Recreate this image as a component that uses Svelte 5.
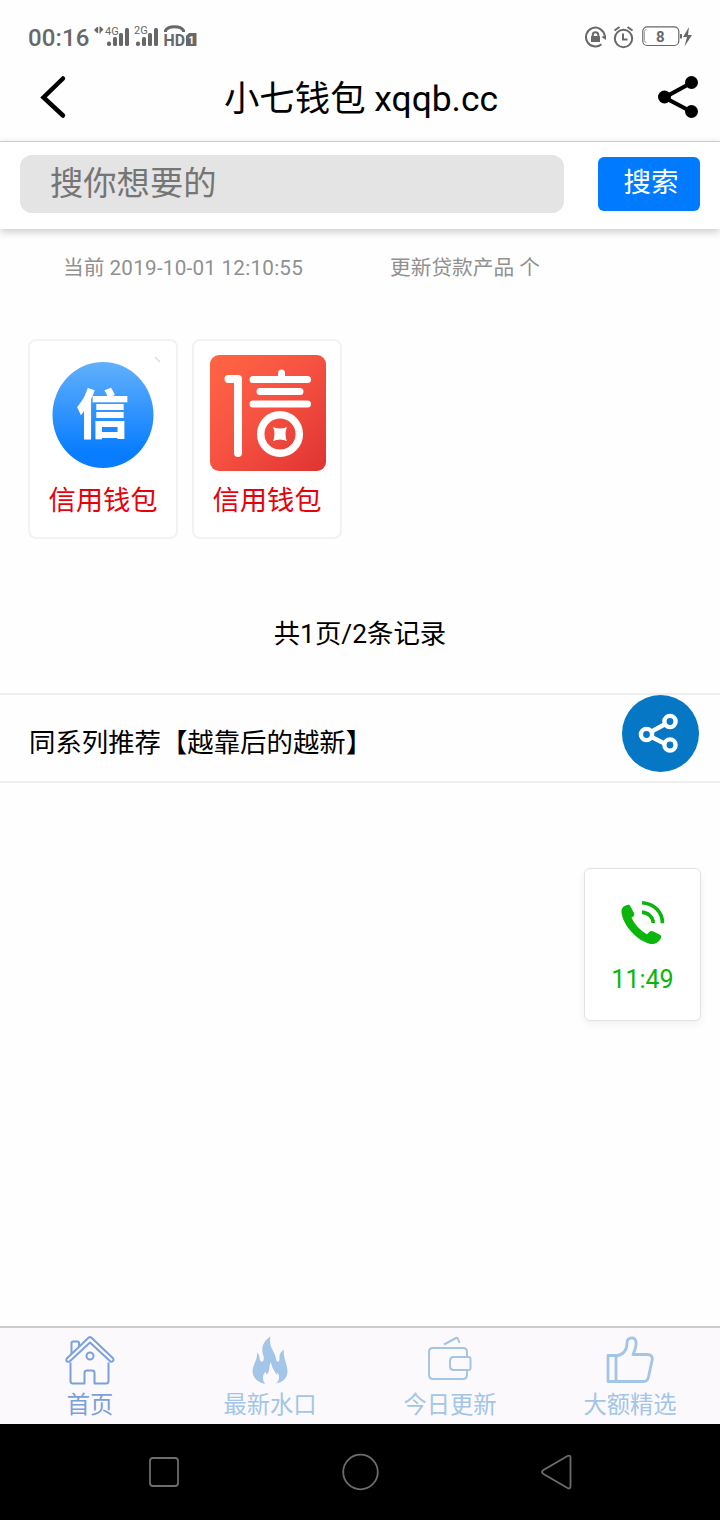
<script lang="ts">
	type Tab = { id: string; label: string };

	const tabs: Tab[] = [
		{ id: 'home', label: '首页' },
		{ id: 'fire', label: '最新水口' },
		{ id: 'wallet', label: '今日更新' },
		{ id: 'like', label: '大额精选' }
	];

	const products = [
		{ logo: 'blue', name: '信用钱包' },
		{ logo: 'red', name: '信用钱包' }
	];

	let active = $state('home');
	let keyword = $state('');
</script>

<div class="screen">
	<div class="status">
		<span class="clock">00:16</span>
		<svg class="signals" width="104" height="30" viewBox="94 22 104 30" fill="#686868">
			<path d="M94 30l3-3v6zM97 27h1.200v6H97zM99.500 26.500h1.200v7h-1.200zM100.500 26.500l3 3-3 3z" />
			<text x="105" y="35" font-size="11">4G</text>
			<text x="134" y="34" font-size="11">2G</text>
			<rect x="107" y="41.500" width="4" height="4.500" rx="1.800" />
			<rect x="113" y="37" width="4" height="9" rx="1.500" />
			<rect x="119" y="33" width="4" height="13" rx="1.500" />
			<rect x="125" y="28" width="4" height="18" rx="1.500" />
			<rect x="136" y="41.500" width="4" height="4.500" rx="1.800" />
			<rect x="142" y="37" width="4" height="9" rx="1.500" />
			<rect x="148" y="33" width="4" height="13" rx="1.500" />
			<rect x="154" y="28" width="4" height="18" rx="1.500" />
			<path d="M165.500 32v-1.500c3-5 15-5 18 0v1.500" fill="none" stroke="#686868" stroke-width="3" />
			<text x="163.500" y="46" font-size="16.500" font-weight="700" textLength="21.500" lengthAdjust="spacingAndGlyphs">HD</text>
			<path d="M189 33h7.500v13H186V36z" />
			<text class="sim" x="188.500" y="43.500" font-size="10" font-weight="700">1</text>
		</svg>
		<svg class="right" width="110" height="30" viewBox="584 22 110 30" fill="none" stroke="#686868" stroke-width="2">
			<path d="M601.500 44.200a9.400 9.400 0 1 1 3.200-8.500" />
			<path d="M601.500 37l4.500-2v5z" fill="#686868" stroke="none" />
			<rect x="591" y="36" width="9" height="6" rx=".5" fill="#686868" stroke="none" />
			<path d="M592.700 37v-2a2.800 2.800 0 0 1 5.600 0v2" />
			<circle cx="623.500" cy="38.500" r="8.700" />
			<path d="M623 33.500v6h4.500M614.500 30.500l5-3.500M627.500 27l5 3.500" />
			<rect x="642.800" y="26.800" width="36" height="18.700" rx="4.500" stroke-width="1.200" />
			<path d="M646.500 29.500q-2 0-2 2v9q0 2 2 2" stroke="#aaa" stroke-width="1" />
			<text x="656" y="42" font-size="15" font-weight="700" fill="#686868" stroke="none">8</text>
			<path d="M680 34h2v4.500h-2zM689 27l-6 10h4l-2.500 9.500 7.500-11.500h-4z" fill="#686868" stroke="none" />
		</svg>
	</div>

	<header>
		<svg width="30" height="46" viewBox="38 74 30 46">
			<path d="M63 78.500L43.500 97.500 63 115.500" fill="none" stroke="#000" stroke-width="4.500" stroke-linecap="round" />
		</svg>
		<h1>小七钱包 xqqb.cc</h1>
		<svg width="42" height="44" viewBox="657 75 42 44">
			<path d="M691 83L664.500 97.500 691 111.500" fill="none" stroke="#000" stroke-width="4.200" />
			<circle cx="691.500" cy="82.500" r="6.500" />
			<circle cx="664.500" cy="97" r="6.500" />
			<circle cx="691.500" cy="111.500" r="6.500" />
		</svg>
	</header>

	<div class="search">
		<input bind:value={keyword} placeholder="搜你想要的" />
		<button class="go">搜索</button>
	</div>

	<div class="info">
		<span class="now">当前 <span class="time">2019-10-01 12:10:55</span></span>
		<span>更新贷款产品 个</span>
	</div>

	<div class="products">
		{#each products as product}
			<div class="card">
				{#if product.logo === 'blue'}
					<svg width="116" height="116" viewBox="0 0 116 116">
						<defs>
							<linearGradient id="blue" x1="0" y1="0" x2="0" y2="1">
								<stop offset="0" stop-color="#62b0fb" />
								<stop offset=".85" stop-color="#087dff" />
							</linearGradient>
						</defs>
						<ellipse cx="58" cy="60" rx="50.500" ry="53" fill="url(#blue)" />
						<path d="M110 2l5 5" stroke="#ecd3dc" stroke-width="1.500" />
						<text class="mark" x="31" y="79" font-size="53">信</text>
					</svg>
				{:else}
					<svg class="red" width="116" height="116" viewBox="0 0 116 116">
						<defs>
							<linearGradient id="red" x1="0" y1="0" x2="1" y2="1">
								<stop offset="0" stop-color="#ff6543" />
								<stop offset=".45" stop-color="#f75342" />
								<stop offset="1" stop-color="#df3331" />
							</linearGradient>
						</defs>
						<rect width="116" height="116" rx="9" fill="url(#red)" />
						<g fill="none" stroke="#fff" stroke-width="8" stroke-linecap="round">
							<path d="M18.500 24h9.500v74" stroke-linejoin="round" />
							<path d="M43 24.500h54.500M50 36.500h40M43 49h54.500" stroke-width="7" />
							<path d="M71.500 18v4" stroke-width="7" />
							<circle cx="70" cy="79" r="19.300" stroke-width="7.500" />
						</g>
						<path d="M63 72q7 3 14 0-3 7 0 14-7-3-14 0 3-7 0-14z" fill="#fff" />
					</svg>
				{/if}
				<span>{product.name}</span>
			</div>
		{/each}
	</div>

	<p class="pages">共1页/2条记录</p>

	<section class="related">
		<span>同系列推荐【越靠后的越新】</span>
		<button class="share" aria-label="分享">
			<svg width="77" height="77" viewBox="0 0 77 77" fill="none" stroke="#fff" stroke-width="4.400">
				<circle cx="38.500" cy="38.500" r="38.500" fill="#0577c5" stroke="none" />
				<path d="M29.500 36.500L42.500 29.500M29.500 42L42.500 48.500" />
				<circle cx="24.500" cy="39.500" r="5.600" />
				<circle cx="48" cy="26.500" r="5.600" />
				<circle cx="48" cy="50" r="5.600" />
			</svg>
		</button>
	</section>

	<main></main>

	<div class="call">
		<svg width="46" height="46" viewBox="0.5 0.5 46 46">
			<path d="M8 5.500C5 6 1.500 8 2 13c1.500 13 16 28.500 29 31.500 5 .5 8-1.500 10.500-6 1-2-.5-3-1.500-3.500L34 32c-1.500-.8-3-.8-4 .3l-2.500 2.400C21 31.500 14.500 24 12 18c2-1 3.500-2.500 2.500-4.500L11 7c-.7-1.300-1.500-2-3-1.500z" fill="#0bb50b" />
			<path d="M22.500 3.200c12 .8 20.500 9 20.500 20.500M22.500 12.600c6 .5 11.200 5 11.200 11" fill="none" stroke="#0bb50b" stroke-width="3.600" />
		</svg>
		<span>11:49</span>
	</div>

	<nav>
		{#each tabs as tab}
			<button class="tab" class:active={active === tab.id} onclick={() => (active = tab.id)}>
				<svg width="50" height="50" viewBox="0 0 50 50" fill="none" stroke="currentColor" stroke-width="2" stroke-linejoin="round">
					{#if tab.id === 'home'}
						<path d="M6.500 18V7q0-1.500 1.500-1.500h4.500q1.500 0 1.500 1.500v4M5.500 26.500V45q0 2.500 2.500 2.500h11.500V37q0-2.500 2.500-2.500h5q2.500 0 2.500 2.500v10.500H41q2.500 0 2.500-2.500V26.500" />
						<path d="M26.500 1.800q-1.500-1.300-3 0L1.800 22.500q-1 1.500 0 2.800 1.500 1 3 0L25 6.500l20.200 18.800q1.500 1 2.800-.3 1-1.400 0-2.700z" />
						<circle cx="25" cy="20" r="3.500" />
					{:else if tab.id === 'fire'}
						<path d="M25.500 0.500C17 6 16 13 18.500 20c1.500 5-2 7.500-3.500 4-1-2.500 0-5-3-7.500 1 7.500-4.500 12-4.500 19 .3 6.500 5.500 11 12.500 12.500-3.500-5.500-2-9.500.5-12.500.3 2 1 3 2.200 2 2.500-3 .8-7.500 3.300-11.500.5 6 3.500 8 5 12 .8 1 1.500 0 1.500-1.500 2.500 4 2 8-1.500 11C38 46 42.300 42 42.500 36c.3-7-4.500-14-3.700-22.500-3.300 2.500-4.800 5.500-4.300 9.500 0 3-2.500 4-3.500 0-1-8-8-12-5.500-22.500z" fill="currentColor" stroke="none" />
					{:else if tab.id === 'wallet'}
						<path d="M19 8.500l12-6.500q1.500-.5 2 1l1.500 4" />
						<path d="M42 21v-5q0-4-4-4H8q-4 0-4 4v23q0 4 4 4h30q4 0 4-4v-5M28 21h15.500q2 0 2 2v9q0 2-2 2H28q-3-.5-3-4v-5q0-3.500 3-4z" />
					{:else}
						<path d="M3 19.500h8v26H3zM11 20c6-1 11-5 11-13 0-6 8-7 9-1 .5 4-1 8-3 12.500h14c4 0 6 2 5 6l-3.500 16.500q-1 4.500-5 4.500H11z" stroke-width="2.800" />
					{/if}
				</svg>
				<span>{tab.label}</span>
			</button>
		{/each}
	</nav>

	<div class="system">
		<svg width="36" height="40" viewBox="0 0 36 40"><rect x="4" y="6" width="28" height="28" rx="3" /></svg>
		<svg width="40" height="40" viewBox="0 0 40 40"><circle cx="19.500" cy="20" r="17.300" /></svg>
		<svg width="36" height="40" viewBox="0 0 36 40">
			<path d="M28.500 4q3-1.500 3 2v28q0 3.500-3 2L4.500 22q-3-2 0-4z" />
		</svg>
	</div>
</div>

<style>
	:global(body) {
		margin: 0;
		background: #fff;
	}

	.screen {
		position: relative;
		display: flex;
		flex-direction: column;
		width: 720px;
		height: 1520px;
		overflow: hidden;
		background: #fefefe;
		color: #000;
		font-family: Roboto, "Noto Sans CJK SC", sans-serif;
		font-weight: 400;
	}

	svg {
		display: block;
		flex: none;
	}

	button {
		border: none;
		padding: 0;
		background: none;
		font: inherit;
		cursor: pointer;
	}

	.status {
		display: flex;
		height: 52px;
		padding: 22px 26px 0 28px;
		box-sizing: border-box;
		color: #686868;
	}

	.clock {
		width: 66px;
		font-size: 24px;
		font-weight: 500;
		line-height: 32px;
		letter-spacing: 0.1px;
	}

	.sim {
		fill: #fff;
	}

	.right {
		margin-left: auto;
	}

	header {
		display: flex;
		align-items: center;
		height: 89px;
		padding: 0 21px 0 38px;
		box-sizing: border-box;
	}

	h1 {
		flex: 1;
		margin: 4px 3px 0 0;
		font-size: 35.4px;
		font-weight: 400;
		line-height: 48px;
		text-align: center;
	}

	.search {
		display: flex;
		align-items: flex-start;
		justify-content: space-between;
		height: 88px;
		padding: 13px 20px 0;
		box-sizing: border-box;
		border-top: 1px solid #ccc;
		background: #fff;
		box-shadow: 0 3px 8px rgba(0, 0, 0, 0.2);
	}

	input {
		width: 544px;
		height: 58px;
		padding: 0 30px 2px;
		box-sizing: border-box;
		border: none;
		border-radius: 12px;
		outline: none;
		background: #e4e4e4;
		font: inherit;
		font-size: 33.3px;
	}

	input::placeholder {
		color: #757575;
	}

	.go {
		width: 102px;
		height: 54px;
		margin-top: 2px;
		padding: 0 0 8px 4px;
		border-radius: 6px;
		background: #007aff;
		color: #fff;
		font-size: 27.5px;
	}

	.info {
		display: flex;
		height: 110px;
		padding: 24px 63px 0;
		box-sizing: border-box;
		color: #909090;
		font-size: 20.7px;
		line-height: 30px;
	}

	.now {
		width: 327px;
	}

	.time {
		letter-spacing: 0.22px;
	}

	.products {
		display: flex;
		gap: 14px;
		height: 200px;
		padding-left: 28px;
	}

	.card {
		display: flex;
		flex-direction: column;
		align-items: center;
		width: 150px;
		height: 200px;
		padding-top: 14px;
		box-sizing: border-box;
		border: 2px solid #f2f2f2;
		border-radius: 8px;
		background: #fff;
		color: #e8000b;
		font-size: 27.3px;
		line-height: 40px;
	}

	.card span {
		margin-top: 10px;
	}

	.red {
		margin-left: 2px;
	}

	.mark {
		fill: #fff;
		font-family: "Noto Sans CJK SC", sans-serif;
		font-weight: 900;
	}

	.pages {
		height: 154px;
		margin: 0;
		padding-top: 75px;
		box-sizing: border-box;
		font-size: 26.4px;
		line-height: 40px;
		text-align: center;
	}

	.related {
		position: relative;
		height: 90px;
		padding: 28px 29px 0;
		box-sizing: border-box;
		border-top: 2px solid #efefef;
		border-bottom: 2px solid #efefef;
		font-size: 26.4px;
		line-height: 40px;
	}

	.share {
		position: absolute;
		top: 0;
		right: 21px;
	}

	main {
		flex: 1;
	}

	.call {
		position: absolute;
		top: 868px;
		right: 19px;
		display: flex;
		flex-direction: column;
		align-items: center;
		width: 117px;
		height: 153px;
		padding-top: 31px;
		box-sizing: border-box;
		border: 1px solid #e2e2e2;
		border-radius: 6px;
		background: #fff;
		box-shadow: 0 3px 8px rgba(0, 0, 0, 0.06);
		color: #0bb50b;
		font-size: 25px;
		line-height: 30px;
	}

	.call span {
		margin-top: 19px;
	}

	nav {
		display: flex;
		height: 98px;
		box-sizing: border-box;
		border-top: 2px solid #ccc;
		background: #fbf9fb;
	}

	.tab {
		display: flex;
		flex: 1;
		flex-direction: column;
		align-items: center;
		padding-top: 8px;
		color: #a3c5e8;
		font-size: 23.3px;
		line-height: 34px;
	}

	.tab span {
		margin-top: 2px;
	}

	.tab.active {
		color: #7ba0de;
	}

	.system {
		display: flex;
		align-items: center;
		justify-content: space-between;
		height: 96px;
		padding: 0 145px 0 146px;
		box-sizing: border-box;
		background: #000;
		fill: none;
		stroke: #6c6c6c;
		stroke-width: 1.8;
	}
</style>
